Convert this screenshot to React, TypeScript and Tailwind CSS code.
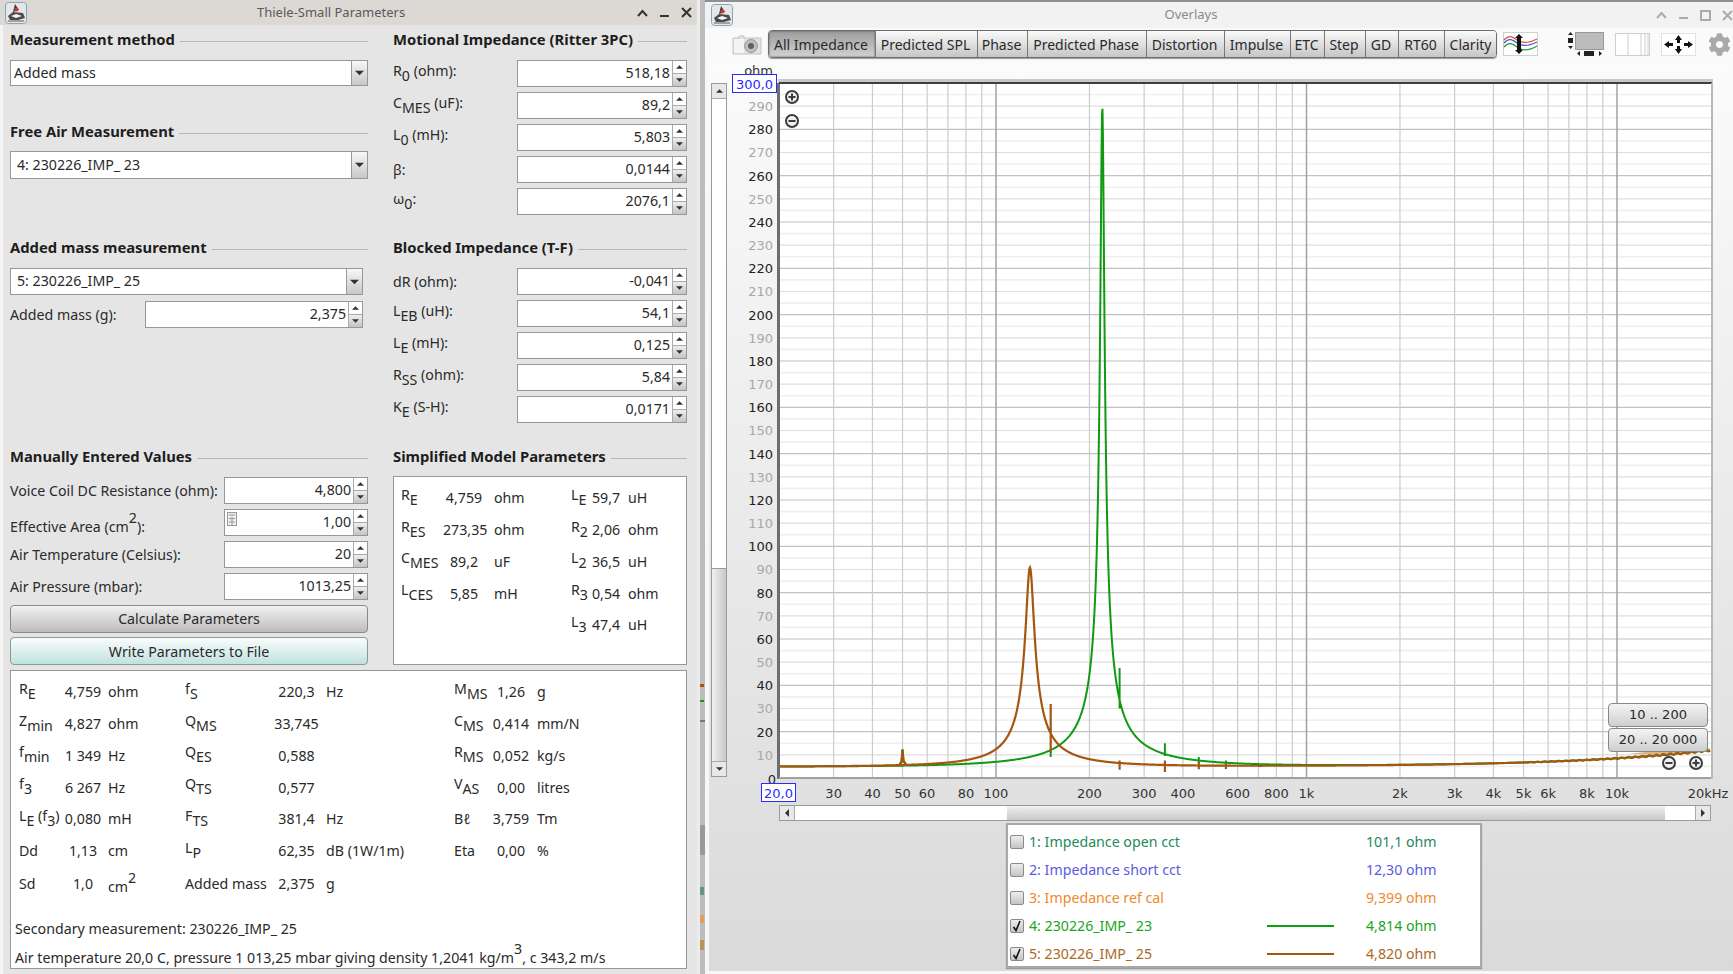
import React from "react";
import { FaCog } from "react-icons/fa";

const Tri = ({ up, size = 7, color = "#333" }: { up?: boolean; size?: number; color?: string }) => (
  <svg width={size} height={size - 3} viewBox="0 0 8 4" className="block">
    <path d={up ? "M4 0L8 4H0Z" : "M0 0H8L4 4Z"} fill={color} />
  </svg>
);

const AppIcon = () => (
  <svg width="22" height="22" viewBox="0 0 22 22" className="block">
    <rect x="0.5" y="0.5" width="21" height="21" rx="3" fill="#e4e6ea" stroke="#8ca3b5" />
    <path d="M10 2L14 8L8 10Z" fill="#3a3a3a" />
    <circle cx="11.5" cy="7.5" r="2" fill="#d9342b" />
    <path d="M3 14L8 10L18 11L20 16L13 18L5 18Z" fill="#4a4a4a" />
    <path d="M6 14L11 12L17 14L11 16Z" fill="#f4f4f4" />
    <path d="M3 19H19" stroke="#8a8a8a" strokeWidth="1.5" />
  </svg>
);

const Spinner = ({ value, calc }: { value: string; calc?: boolean }) => (
  <div className="flex h-[27px] flex-1 border border-[#979797] bg-white relative">
    {calc && (
      <svg width="10" height="14" viewBox="0 0 10 14" className="absolute left-[2px] top-[2px]">
        <rect x="0.5" y="0.5" width="9" height="13" fill="#eee" stroke="#999" />
        <path d="M2 3H8M2 6.5H8M2 10H8M5 5V13" stroke="#999" />
      </svg>
    )}
    <div className="flex-1 text-right pr-[2px] leading-[23px] text-[#2a2a2a]">{value}</div>
    <div className="w-[14px] flex flex-col border-l border-[#aaa]">
      <div className="flex-1 flex items-center justify-center bg-white border-b border-[#aaa]">
        <Tri up />
      </div>
      <div className="flex-1 flex items-center justify-center bg-linear-to-b from-[#eee] to-[#c4c4c4]">
        <Tri />
      </div>
    </div>
  </div>
);

const Combo = ({ value, h, w, pl }: { value: string; h: string; w: string; pl: string }) => (
  <div className={`flex ${h} ${w} border border-[#979797] bg-white`}>
    <div className={`flex-1 ${pl} pb-[1px] flex items-center text-[#2a2a2a]`}>{value}</div>
    <div className="w-[16px] flex items-center justify-center border-l border-[#999] bg-linear-to-b from-[#f7f7f7] to-[#c8c8c8]">
      <Tri size={9} />
    </div>
  </div>
);

const Header = ({ children }: { children: React.ReactNode }) => (
  <div className="h-[20px] flex items-center gap-[5px]">
    <span className="font-bold text-[14.8px] pb-[2px] text-[#1d1d1d] whitespace-nowrap">{children}</span>
    <div className="flex-1 h-px mt-[2px] bg-[#b3b8bb]" />
  </div>
);

const Sub = ({ children }: { children: React.ReactNode }) => (
  <span className="align-[-5px] leading-none">{children}</span>
);
const Sup = ({ children }: { children: React.ReactNode }) => (
  <span className="align-[9px] leading-none">{children}</span>
);
const L = ({ a, s, b }: { a: string; s?: string; b?: React.ReactNode }) => (
  <span className="whitespace-nowrap">
    {a}
    {s && <Sub>{s}</Sub>}
    {b}
  </span>
);

const FieldRow = ({ label, value }: { label: React.ReactNode; value: string }) => (
  <div className="flex items-center h-[27px] mb-[5px]">
    <div className="w-[124px] -mt-[4px] text-[#2a2a2a]">{label}</div>
    <Spinner value={value} />
  </div>
);

const ManualRow = ({ label, value, calc }: { label: React.ReactNode; value: string; calc?: boolean }) => (
  <div className="flex items-center h-[27px] mb-[5px]">
    <div className="w-[214px] text-[#2a2a2a] whitespace-nowrap">{label}</div>
    <Spinner value={value} calc={calc} />
  </div>
);

const SimpleModel = () => {
  const rows: [React.ReactNode, string, string, React.ReactNode, string, string][] = [
    [<L a="R" s="E" />, "4,759", "ohm", <L a="L" s="E" />, "59,7", "uH"],
    [<L a="R" s="ES" />, "273,35", "ohm", <L a="R" s="2" />, "2,06", "ohm"],
    [<L a="C" s="MES" />, "89,2", "uF", <L a="L" s="2" />, "36,5", "uH"],
    [<L a="L" s="CES" />, "5,85", "mH", <L a="R" s="3" />, "0,54", "ohm"],
    ["", "", "", <L a="L" s="3" />, "47,4", "uH"],
  ];
  return (
    <div className="mt-[9px] h-[189px] border border-[#979797] bg-white pt-[5px] pl-[7px] grid grid-cols-[42px_42px_86px_21px_36px_1fr] auto-rows-[31.8px] items-center text-[#2a2a2a]">
      {rows.map((r, i) => (
        <React.Fragment key={i}>
          <div className="-mt-[5px]">{r[0]}</div>
          <div className="text-center">{r[1]}</div>
          <div className="pl-[9px]">{r[2]}</div>
          <div className="-mt-[5px]">{r[3]}</div>
          <div>{r[4]}</div>
          <div>{r[5]}</div>
        </React.Fragment>
      ))}
    </div>
  );
};

const Results = () => {
  const rows: React.ReactNode[][] = [
    [<L a="R" s="E" />, "4,759", "ohm", <L a="f" s="S" />, "220,3", "Hz", <L a="M" s="MS" />, "1,26", "g"],
    [<L a="Z" s="min" />, "4,827", "ohm", <L a="Q" s="MS" />, "33,745", "", <L a="C" s="MS" />, "0,414", "mm/N"],
    [<L a="f" s="min" />, "1 349", "Hz", <L a="Q" s="ES" />, "0,588", "", <L a="R" s="MS" />, "0,052", "kg/s"],
    [<L a="f" s="3" />, "6 267", "Hz", <L a="Q" s="TS" />, "0,577", "", <L a="V" s="AS" />, "0,00", "litres"],
    [
      <span className="whitespace-nowrap">L<Sub>E</Sub> (f<Sub>3</Sub>)</span>,
      "0,080", "mH", <L a="F" s="TS" />, "381,4", "Hz", "Bℓ", "3,759", "Tm",
    ],
    ["Dd", "1,13", "cm", <L a="L" s="P" />, "62,35", "dB (1W/1m)", "Eta", "0,00", "%"],
    ["Sd", "1,0", <span>cm<Sup>2</Sup></span>, "Added mass", "2,375", "g", "", "", ""],
  ];
  return (
    <div className="mt-[3px] h-[299px] ml-[10px] w-[677px] border border-[#979797] bg-white text-[#2a2a2a]">
      <div className="pt-[5px] pl-[8px] grid grid-cols-[43px_42px_81px_88px_47px_134px_36px_42px_1fr] auto-rows-[31.8px] items-center">
        {rows.map((r, i) => (
          <React.Fragment key={i}>
            <div className={typeof r[0] === "string" ? (i === 6 ? "mt-[2px]" : "") : "-mt-[5px]"}>{r[0]}</div>
            <div className={`text-center ${i === 6 ? "mt-[2px]" : ""}`}>{r[1]}</div>
            <div className={`pl-[4px] ${i === 6 ? "mt-[2px]" : ""}`}>{r[2]}</div>
            <div className={typeof r[3] === "string" ? (i === 6 ? "mt-[2px]" : "") : "-mt-[5px]"}>{r[3]}</div>
            <div className={`text-center ${i === 6 ? "mt-[2px]" : ""}`}>{r[4]}</div>
            <div className={`pl-[6px] whitespace-nowrap ${i === 6 ? "mt-[2px]" : ""}`}>{r[5]}</div>
            <div className={typeof r[6] === "string" ? "" : "-mt-[5px]"}>{r[6]}</div>
            <div className="text-center">{r[7]}</div>
            <div className="pl-[5px]">{r[8]}</div>
          </React.Fragment>
        ))}
      </div>
      <div className="pl-[4px] mt-[19px] h-[22px] leading-[22px]">Secondary measurement: 230226_IMP_ 25</div>
      <div className="pl-[4px] mt-[2px] h-[22px] leading-[22px] whitespace-nowrap">
        Air temperature 20,0 C, pressure 1 013,25 mbar giving density 1,2041 kg/m<Sup>3</Sup>, c 343,2 m/s
      </div>
    </div>
  );
};

const LeftWindow = () => (
  <div className="w-[697px] h-full flex flex-col bg-[#e5e5e5] border-l-[3px] border-[#f4f4f4]">
    <div className="h-[25px] -ml-[3px] bg-[#dcd8d4] flex items-center relative shrink-0">
      <div className="ml-[5px]"><AppIcon /></div>
      <div className="absolute left-[257px] w-[145px] text-center text-[13px] text-[#5a5a5a] whitespace-nowrap">Thiele-Small Parameters</div>
      <div className="ml-auto mr-[5px] flex items-center gap-[11px]">
        <svg width="11" height="8" viewBox="0 0 11 8"><path d="M1 7L5.5 2L10 7" fill="none" stroke="#333" strokeWidth="2" /></svg>
        <svg width="11" height="8" viewBox="0 0 11 8"><path d="M1 7H10" fill="none" stroke="#333" strokeWidth="2" /></svg>
        <svg width="11" height="11" viewBox="0 0 11 11"><path d="M1 1L10 10M10 1L1 10" fill="none" stroke="#333" strokeWidth="2" /></svg>
      </div>
    </div>
    <div className="-ml-[3px] pl-[10px] pr-[10px] grid grid-cols-[358px_294px] gap-x-[25px] shrink-0">
      <div className="pt-[5px] h-[213px]">
        <Header>Measurement method</Header>
        <div className="mt-[10px]"><Combo value="Added mass" h="h-[26px]" w="w-full" pl="pl-[3px]" /></div>
        <div className="mt-[36px]"><Header>Free Air Measurement</Header></div>
        <div className="mt-[9px]"><Combo value="4: 230226_IMP_ 23" h="h-[28px]" w="w-full" pl="pl-[6px]" /></div>
      </div>
      <div className="pt-[5px] h-[213px]">
        <Header>Motional Impedance (Ritter 3PC)</Header>
        <div className="mt-[10px]">
          <FieldRow label={<L a="R" s="0" b=" (ohm):" />} value="518,18" />
          <FieldRow label={<L a="C" s="MES" b=" (uF):" />} value="89,2" />
          <FieldRow label={<L a="L" s="0" b=" (mH):" />} value="5,803" />
          <FieldRow label={<span className="inline-block mt-[4px]">β:</span>} value="0,0144" />
          <FieldRow label={<L a="ω" s="0" b=":" />} value="2076,1" />
        </div>
      </div>
      <div className="h-[209px]">
        <Header>Added mass measurement</Header>
        <div className="mt-[10px]"><Combo value="5: 230226_IMP_ 25" h="h-[27px]" w="w-[353px]" pl="pl-[6px]" /></div>
        <div className="mt-[6px] w-[353px] flex items-center h-[27px]">
          <div className="w-[135px] text-[#2a2a2a]">Added mass (g):</div>
          <Spinner value="2,375" />
        </div>
      </div>
      <div className="h-[209px]">
        <Header>Blocked Impedance (T-F)</Header>
        <div className="mt-[10px]">
          <FieldRow label={<span className="inline-block mt-[4px]">dR (ohm):</span>} value="-0,041" />
          <FieldRow label={<L a="L" s="EB" b=" (uH):" />} value="54,1" />
          <FieldRow label={<L a="L" s="E" b=" (mH):" />} value="0,125" />
          <FieldRow label={<L a="R" s="SS" b=" (ohm):" />} value="5,84" />
          <FieldRow label={<L a="K" s="E" b=" (S-H):" />} value="0,0171" />
        </div>
      </div>
      <div className="h-[220px]">
        <Header>Manually Entered Values</Header>
        <div className="mt-[10px]">
          <ManualRow label="Voice Coil DC Resistance (ohm):" value="4,800" />
          <ManualRow label={<span className="inline-block mt-[4px]">Effective Area (cm<Sup>2</Sup>):</span>} value="1,00" calc />
          <ManualRow label="Air Temperature (Celsius):" value="20" />
          <ManualRow label="Air Pressure (mbar):" value="1013,25" />
        </div>
        <button className="w-full h-[28px] pb-[1px] rounded-[4px] border border-[#8a8a8a] bg-linear-to-b from-[#f2f2f2] to-[#bdbdbd] text-[#2a2a2a]">Calculate Parameters</button>
        <button className="mt-[4px] w-full h-[28px] pt-[1px] rounded-[4px] border border-[#8a9a9a] bg-linear-to-b from-[#fafdfd] to-[#bfe2df] text-[#2a2a2a]">Write Parameters to File</button>
      </div>
      <div className="h-[220px]">
        <Header>Simplified Model Parameters</Header>
        <SimpleModel />
      </div>
    </div>
    <div className="-ml-[3px]"><Results /></div>
  </div>
);

/* chart geometry in page coordinates */
const X0 = 779, X1 = 1711, Y0 = 83, Y1 = 778;
const fx = (f: number) => 996 + Math.log10(f / 100) * 310.5;
const zy = (z: number) => Y1 - z * 2.3167;
const imp = (f: number, rs: number, fs: number, q: number) => {
  const u = q * (f / fs - fs / f);
  const d = 1 + u * u;
  const re = 4.9 + rs / d;
  const im = (rs * u) / d;
  return Math.sqrt(re * re + im * im) + 0.36 * (f / 1000);
};
const curve = (rs: number, fs: number, q: number, wob: number) => {
  let d = "";
  for (let px = X0; px <= X1 - 1; px += 0.5) {
    const f = 100 * Math.pow(10, (px - 996) / 310.5);
    const w = f > 5000 ? wob * Math.sin(px * 0.9) * (f / 10000) : 0;
    d += `${d ? "L" : "M"}${px.toFixed(1)} ${zy(imp(f, rs, fs, q) + w).toFixed(2)}`;
  }
  return d;
};
const spike = (f: number, a: number, b: number) => `M${fx(f).toFixed(1)} ${zy(a).toFixed(1)}V${zy(b).toFixed(1)}`;
const hump = (f: number, top: number, base: number) => {
  const x = fx(f);
  return `M${(x - 3).toFixed(1)} ${zy(base).toFixed(1)}L${(x - 1).toFixed(1)} ${zy(base + 1).toFixed(1)}L${x.toFixed(1)} ${zy(top).toFixed(1)}L${(x + 1).toFixed(1)} ${zy(base + 1.5).toFixed(1)}L${(x + 4).toFixed(1)} ${zy(base - 0.5).toFixed(1)}`;
};
const greenD = curve(285, 220, 33.7, 0) + hump(50, 12.5, 5.8) + spike(150, 11.5, 9) + spike(250, 47.5, 30) + spike(350, 15, 9.5) + spike(450, 9, 6.3) + spike(550, 7.6, 6);
const brownD = curve(86, 128.6, 15.5, 0.25) + hump(50, 12, 6) + spike(150, 32, 11) + spike(250, 7.6, 3.6) + spike(350, 7.5, 2.6) + spike(450, 6.8, 3.8) + spike(550, 6.5, 3.9);

const freqs: number[] = [];
[10, 100, 1000, 10000].forEach((d) => {
  for (let i = 1; i <= 9; i++) {
    const f = d * i;
    if (f > 20 && f < 20000) freqs.push(f);
  }
});
const xLabels: [number, string][] = [
  [30, "30"], [40, "40"], [50, "50"], [60, "60"], [80, "80"], [100, "100"], [200, "200"], [300, "300"], [400, "400"], [600, "600"], [800, "800"],
  [1000, "1k"], [2000, "2k"], [3000, "3k"], [4000, "4k"], [5000, "5k"], [6000, "6k"], [8000, "8k"], [10000, "10k"],
];

const ZoomIcon = ({ x, y, plus }: { x: number; y: number; plus?: boolean }) => (
  <g stroke="#3c3c3c" fill="none">
    <circle cx={x} cy={y} r="6" strokeWidth="2" fill="#f0f0f0" />
    <path d={plus ? `M${x - 3.5} ${y}H${x + 3.5}M${x} ${y - 3.5}V${y + 3.5}` : `M${x - 3.5} ${y}H${x + 3.5}`} strokeWidth="2" />
  </g>
);

const Chart = () => {
  const ys: number[] = [];
  for (let z = 5; z < 300; z += 5) ys.push(z);
  return (
    <svg width="1006" height="741" viewBox="727 62 1006 741" className="block font-['DejaVu_Sans',sans-serif]">
      <rect x={X0 - 1} y={Y0 - 4} width={X1 - X0 + 3} height="4" fill="#c8c8c8" />
      <rect x={X0} y={Y0} width={X1 - X0} height={Y1 - Y0} fill="#fff" />
      {ys.map((z) => (
        <line key={z} x1={X0} x2={X1} y1={zy(z)} y2={zy(z)}
          stroke={z % 20 === 0 ? "#c2c2c2" : z % 10 === 0 ? "#dedede" : "#efefef"}
          strokeWidth={z % 10 === 0 ? 1.2 : 1.6} />
      ))}
      {freqs.map((f) => (
        <line key={f} x1={fx(f)} x2={fx(f)} y1={Y0} y2={Y1}
          stroke={f === 100 || f === 1000 || f === 10000 ? "#a2a2a2" : "#cccccc"}
          strokeWidth={f === 100 || f === 1000 || f === 10000 ? 1.5 : 1.2} />
      ))}
      <path d={greenD} fill="none" stroke="#0f9a12" strokeWidth="2" />
      <path d="M1628 754L1688 747L1709 748L1709 751L1660 755Z" fill="#d9b48f" />
      <path d={brownD} fill="none" stroke="#a5560f" strokeWidth="2.2" />
      <rect x={X0 - 2} y={Y0} width="3" height={Y1 - Y0 + 1} fill="#6e6e6e" />
      <rect x={X0} y={Y0 - 1} width={X1 - X0 + 1} height="2" fill="#3f3f3f" />
      <rect x={X0} y={Y1 - 1} width={X1 - X0 + 1} height="2" fill="#a0a0a0" />
      <rect x={X1} y={Y0} width="2" height={Y1 - Y0 + 1} fill="#b8b8b8" />
      <ZoomIcon x={792} y={97} plus />
      <ZoomIcon x={792} y={121} />
      <ZoomIcon x={1669} y={763} />
      <ZoomIcon x={1696} y={763} plus />
      <g fontSize="13" textAnchor="end" dominantBaseline="central">
        {Array.from({ length: 30 }, (_, i) => i * 10).filter((z) => z !== 0).map((z) => (
          <text key={z} x="773" y={zy(z) + 0.5} fill={z % 20 === 0 ? "#222" : "#a8a8a8"}>{z}</text>
        ))}
        <text x="776" y="779" fill="#222">0</text>
        <text x="773" y="70" fill="#333">ohm</text>
      </g>
      <g fontSize="13" textAnchor="middle" dominantBaseline="central" fill="#333">
        {xLabels.map(([f, t]) => (
          <text key={f} x={fx(f)} y="793">{t}</text>
        ))}
        <text x="1708" y="793">20kHz</text>
      </g>
      <rect x="732.5" y="74.5" width="44" height="18" fill="#fff" stroke="#2a2aff" />
      <text x="754.5" y="84" fontSize="13" textAnchor="middle" dominantBaseline="central" fill="#2a2aff">300,0</text>
      <rect x="761.5" y="783.5" width="34" height="18" fill="#fff" stroke="#2a2aff" />
      <text x="778.5" y="793" fontSize="13" textAnchor="middle" dominantBaseline="central" fill="#2a2aff">20,0</text>
    </svg>
  );
};

const tabs: [string, string][] = [
  ["All Impedance", "w-[107px]"], ["Predicted SPL", "w-[102px]"], ["Phase", "w-[50px]"], ["Predicted Phase", "w-[119px]"], ["Distortion", "w-[78px]"],
  ["Impulse", "w-[66px]"], ["ETC", "w-[34px]"], ["Step", "w-[41px]"], ["GD", "w-[33px]"], ["RT60", "w-[46px]"], ["Clarity", "w-[53px]"],
];

const Toolbar = () => (
  <div className="h-[34px] pb-[2px] flex items-center shrink-0 bg-[#fafafa]">
    <svg width="30" height="21" viewBox="0 0 30 21" className="ml-[27px] mr-[6px]">
      <path d="M3 4H7V2H12V4H29V20H1V4Z" fill="#e2e2e2" stroke="#c4c4c4" />
      <path d="M2 5H12V19H2Z" fill="#f4f4f4" />
      <circle cx="19" cy="12" r="6.5" fill="#bdbdbd" stroke="#999" />
      <circle cx="19" cy="12" r="3" fill="#5f5f5f" />
    </svg>
    <div className="flex h-[28px] w-[729px] rounded-[4px] border border-[#6d6d6d] overflow-hidden shadow-[0_1px_1px_#999]">
      {tabs.map(([t, w], i) => (
        <div key={t} className={`${w} shrink-0 pr-[2px] flex items-center justify-center whitespace-nowrap text-[14px] text-[#2a2a2a] border-r border-[#777] last:border-r-0 ${i === 0 ? "bg-linear-to-b from-[#9c9c9c] to-[#d2d2d2] shadow-[inset_0_0_2px_#444]" : "bg-linear-to-b from-[#fafafa] to-[#c6c6c6]"}`}>{t}</div>
      ))}
    </div>
    <svg width="35" height="24" viewBox="0 0 35 24" className="ml-[6px]">
      <rect x="0.5" y="0.5" width="34" height="23" fill="#fff" stroke="#cfcfcf" />
      <path d="M1 8C6 2 10 5 14 8S24 12 34 7" fill="none" stroke="#d9534a" strokeWidth="1.3" />
      <path d="M1 11C6 5 10 8 14 11S24 15 34 10" fill="none" stroke="#4a5bd9" strokeWidth="1.3" />
      <path d="M1 15C6 9 10 12 14 15S24 20 34 14" fill="none" stroke="#2a9a3a" strokeWidth="1.3" />
      <path d="M16 2L20 6H18V18H20L16 22L12 18H14V6H12Z" fill="#111" />
    </svg>
    <svg width="36" height="24" viewBox="0 0 36 24" className="ml-[30px]">
      <rect x="7.5" y="0.5" width="28" height="17" fill="#bcbcbc" stroke="#999" />
      <rect x="0" y="6" width="5" height="5" fill="#222" />
      <path d="M2.5 0L5 3H0ZM2.5 17L0 14H5Z" fill="#222" />
      <rect x="16" y="19" width="10" height="5" fill="#222" />
      <path d="M9 21.5L12 19V24ZM34 21.5L31 19V24Z" fill="#222" />
    </svg>
    <svg width="35" height="23" viewBox="0 0 35 23" className="ml-[11px]">
      <rect x="0.5" y="0.5" width="34" height="22" fill="#fff" stroke="#cfcfcf" />
      <path d="M13 0V23M26 0V23M30 0V23M33 0V23" stroke="#cfcfcf" />
    </svg>
    <svg width="35" height="23" viewBox="0 0 35 23" className="ml-[11px]">
      <rect x="0.5" y="0.5" width="34" height="22" fill="#fff" stroke="#e2e2e2" />
      <path d="M17.5 2L21 7H19V10H16V7H14ZM17.5 21L14 16H16V13H19V16H21ZM3 11.5L8 8V10H12V13H8V15ZM32 11.5L27 15V13H23V10H27V8Z" fill="#111" />
    </svg>
    <FaCog className="ml-[12px]" size={23} color="#a9a9a9" />
  </div>
);

const Hscroll = () => (
  <div className="ml-[70px] mt-[2px] w-[932px] h-[16px] flex border border-[#9a9a9a] shrink-0">
    <div className="w-[15px] bg-[#e8e8e8] flex items-center justify-center border-r border-[#aaa]">
      <svg width="4" height="8" viewBox="0 0 4 8"><path d="M4 0V8L0 4Z" fill="#333" /></svg>
    </div>
    <div className="w-[212px] bg-white" />
    <div className="w-[658px] bg-linear-to-b from-[#f0f0f0] to-[#c8c8c8]" />
    <div className="flex-1 bg-white" />
    <div className="w-[15px] bg-[#e8e8e8] flex items-center justify-center border-l border-[#aaa]">
      <svg width="4" height="8" viewBox="0 0 4 8"><path d="M0 0V8L4 4Z" fill="#333" /></svg>
    </div>
  </div>
);

const Legend = () => {
  const rows = [
    { t: "1: Impedance open cct", v: "101,1 ohm", c: "text-[#1f8a5c]" },
    { t: "2: Impedance short cct", v: "12,30 ohm", c: "text-[#5a5ae0]" },
    { t: "3: Impedance ref cal", v: "9,399 ohm", c: "text-[#ee8a2a]" },
    { t: "4: 230226_IMP_ 23", v: "4,814 ohm", c: "text-[#1aa51a]", on: true, l: "bg-[#0fa00f]" },
    { t: "5: 230226_IMP_ 25", v: "4,820 ohm", c: "text-[#ab6a25]", on: true, l: "bg-[#a5560f]" },
  ];
  return (
    <div className="ml-[297px] mt-[2px] w-[476px] h-[145px] bg-white border-2 border-[#a8a8a8] pt-[3px] shadow-[0_1px_1px_#999] shrink-0">
      {rows.map((r) => (
        <div key={r.t} className={`h-[28px] flex items-center ${r.c}`}>
          <div className="ml-[2px] w-[14px] h-[14px] rounded-[2px] border border-[#8a8a8a] bg-linear-to-b from-[#eee] to-[#c4c4c4] flex items-center justify-center">
            {r.on && (
              <svg width="10" height="12" viewBox="0 0 10 12"><path d="M1.5 7L4 10.5L8 1" fill="none" stroke="#111" strokeWidth="1.6" /></svg>
            )}
          </div>
          <div className="ml-[5px] w-[238px] whitespace-nowrap">{r.t}</div>
          <div className="w-[99px] flex items-center">
            {r.l && <div className={`w-[67px] h-[2px] ${r.l}`} />}
          </div>
          <div className="whitespace-nowrap">{r.v}</div>
        </div>
      ))}
    </div>
  );
};

const RightWindow = () => (
  <div className="flex-1 h-full flex flex-col bg-[#f7f7f7] border-t-2 border-[#8f8f8f]">
    <div className="h-[26px] flex items-center relative shrink-0 bg-[#f2f2f2]">
      <div className="ml-[6px]"><AppIcon /></div>
      <div className="absolute left-[456px] w-[60px] text-center text-[13px] text-[#8a8a8a]">Overlays</div>
      <div className="ml-auto mr-0 flex items-center gap-[11px]">
        <svg width="11" height="8" viewBox="0 0 11 8"><path d="M1 7L5.5 2L10 7" fill="none" stroke="#aaa" strokeWidth="2" /></svg>
        <svg width="11" height="8" viewBox="0 0 11 8"><path d="M1 7H10" fill="none" stroke="#aaa" strokeWidth="2" /></svg>
        <svg width="11" height="11" viewBox="0 0 11 11"><rect x="1" y="1" width="9" height="9" fill="none" stroke="#aaa" strokeWidth="2" /></svg>
        <svg width="11" height="11" viewBox="0 0 11 11"><path d="M1 1L10 10M10 1L1 10" fill="none" stroke="#aaa" strokeWidth="2" /></svg>
      </div>
    </div>
    <Toolbar />
    <div className="h-[909px] ml-[4px] bg-linear-to-b from-[#fbfbfb] to-[#dadada] flex flex-col shrink-0">
      <div className="flex h-[741px] shrink-0">
        <div className="ml-[2px] w-[16px] mt-[21px] h-[694px] border border-[#9a9a9a] flex flex-col shrink-0">
          <div className="h-[15px] bg-[#e8e8e8] border-b border-[#aaa] flex items-center justify-center"><Tri up /></div>
          <div className="h-[469px] bg-white" />
          <div className="flex-1 bg-linear-to-r from-[#f0f0f0] to-[#c8c8c8] border-t border-[#999]" />
          <div className="h-[15px] bg-[#e8e8e8] border-t border-[#aaa] flex items-center justify-center"><Tri /></div>
        </div>
        <div className="relative">
          <Chart />
          <div className="absolute left-[881px] top-[641px] w-[100px]">
            <div className="h-[24px] rounded-[4px] border border-[#888] bg-linear-to-b from-[#f4f4f4] to-[#cfcfcf] flex items-center justify-center text-[#2a2a2a] font-['DejaVu_Sans',sans-serif] text-[13px] whitespace-nowrap">10 .. 200</div>
            <div className="mt-px h-[24px] rounded-[4px] border border-[#888] bg-linear-to-b from-[#f4f4f4] to-[#cfcfcf] flex items-center justify-center text-[#2a2a2a] font-['DejaVu_Sans',sans-serif] text-[13px] whitespace-nowrap">20 .. 20 000</div>
          </div>
        </div>
      </div>
      <Hscroll />
      <Legend />
    </div>
  </div>
);

const Strip = () => (
  <div className="w-[8px] h-full flex shrink-0 bg-[#ececec]">
    <div className="w-[5px] ml-[3px] h-full bg-[#bdbdbd] relative">
      <div className="absolute left-0 top-[684px] w-[4px] h-[3px] bg-[#a5560f]" />
      <div className="absolute left-0 top-[700px] w-[4px] h-[2px] bg-[#0f9a12]" />
      <div className="absolute left-0 top-[720px] w-[5px] h-[2px] bg-[#777]" />
      <div className="absolute left-0 top-[825px] w-[5px] h-[30px] bg-[#999]" />
      <div className="absolute left-0 top-[887px] w-[4px] h-[8px] bg-[#5f9a80]" />
      <div className="absolute left-0 top-[915px] w-[4px] h-[8px] bg-[#e0a060]" />
      <div className="absolute left-0 top-[940px] w-[4px] h-[10px] bg-[#b8945a]" />
    </div>
  </div>
);

export default function App() {
  return (
    <div className="w-[1733px] h-[974px] flex overflow-hidden bg-white font-['Noto_Sans',sans-serif] text-[14.2px]">
      <LeftWindow />
      <Strip />
      <RightWindow />
    </div>
  );
}
